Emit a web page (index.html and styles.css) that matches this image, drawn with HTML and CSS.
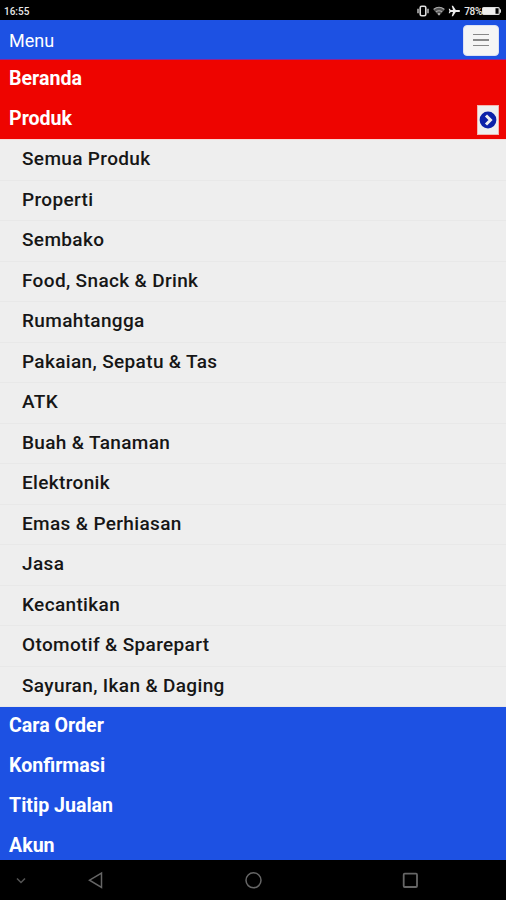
FILE: index.html
```html
<!DOCTYPE html>
<html lang="id">
<head>
  <meta charset="UTF-8" />
  <meta name="viewport" content="width=device-width, initial-scale=1.0"/>
  <title>Menu</title>
  <link rel="stylesheet" href="styles.css">
</head>
<body>
  <div class="status-bar">
    <span class="clock">16:55</span>
    <svg class="status-icons" width="44" height="12" viewBox="0 0 44 12" fill="none">
      <!-- vibrate -->
      <rect x="3.2" y="1.2" width="5.6" height="9.6" rx="1.5" stroke="#ddd" stroke-width="1.6"/>
      <path d="M1 3.8v4.4M11 3.8v4.4" stroke="#bbb" stroke-width="1.5"/>
      <!-- wifi -->
      <path d="M16 4.3Q22 -.5 28 4.3L22 11Z" fill="#555"/>
      <path d="M16.8 4.3Q22 .3 27.2 4.3M19 6.8Q22 4.6 25 6.8" stroke="#aaa" stroke-width="1.1"/>
      <circle cx="22" cy="9" r="1.1" fill="#bbb"/>
      <!-- airplane -->
      <path d="M43 6c0-.7-.5-1-1.200-1H38.800L36 .8h-1.300L36 5h-2.300l-1-1.300h-1L32.400 6l-.7 2.300h1l1-1.300H36l-1.300 4.200H36L38.800 7h3c.7 0 1.200-.3 1.200-1z" fill="#eee"/>
    </svg>
    <span class="percent">78%</span>
    <svg class="battery" width="20" height="8" viewBox="0 0 20 8">
      <rect x=".6" y=".6" width="16.600" height="6.800" rx="1" fill="none" stroke="#ddd" stroke-width="1.200"/>
      <rect x="1" y="1" width="12.500" height="6" fill="#eee"/>
      <rect x="17.500" y="2.300" width="1.500" height="3.400" fill="#ddd"/>
    </svg>
  </div>

  <header class="navbar">
    <span>Menu</span>
    <button class="toggle" aria-label="Menu"><i></i><i></i><i></i></button>
  </header>

  <nav>
    <ul class="menu active">
      <li>Beranda</li>
      <li>Produk
        <span class="arrow">
          <svg width="18" height="18" viewBox="0 0 18 18">
            <circle cx="9" cy="9" r="8.400" fill="#0c21a8"/>
            <path d="M7 4.500L11.500 9 7 13.500" fill="none" stroke="#eee" stroke-width="3"/>
          </svg>
        </span>
      </li>
    </ul>
    <ul class="submenu">
      <li>Semua Produk</li>
      <li>Properti</li>
      <li>Sembako</li>
      <li>Food, Snack &amp; Drink</li>
      <li>Rumahtangga</li>
      <li>Pakaian, Sepatu &amp; Tas</li>
      <li>ATK</li>
      <li>Buah &amp; Tanaman</li>
      <li>Elektronik</li>
      <li>Emas &amp; Perhiasan</li>
      <li>Jasa</li>
      <li>Kecantikan</li>
      <li>Otomotif &amp; Sparepart</li>
      <li>Sayuran, Ikan &amp; Daging</li>
    </ul>
    <ul class="menu">
      <li>Cara Order</li>
      <li>Konfirmasi</li>
      <li>Titip Jualan</li>
      <li>Akun</li>
    </ul>
  </nav>

  <footer class="android-nav">
    <svg width="506" height="40" viewBox="0 0 506 40" fill="none" stroke="#666" stroke-width="1.500">
      <path d="M17 18.500l4 4 4-4" stroke="#555"/>
      <path d="M101.500 13v14.500L89.500 20.200z"/>
      <circle cx="253.500" cy="20.300" r="7.500"/>
      <rect x="403.700" y="13.700" width="13.300" height="13.300" rx="1" stroke-width="1.800"/>
    </svg>
  </footer>
</body>
</html>
```

FILE: styles.css
```css
* {
  box-sizing: border-box;
}

body {
  margin: 0;
  height: 900px;
  overflow: hidden;
  display: flex;
  flex-direction: column;
  background: #000;
  color: #fff;
  font-family: Roboto, sans-serif;
}

ul {
  list-style: none;
  margin: 0;
  padding: 0;
}

.status-bar {
  height: 20px;
  flex: none;
  display: flex;
  align-items: center;
  padding: 2px 4px 0;
  font-size: 10px;
  font-weight: 500;
  color: #e8e8e8;
}

.clock {
  flex: 1;
}

.status-icons {
  margin-right: 3px;
}

.percent {
  letter-spacing: -0.3px;
}

.navbar {
  height: 40px;
  flex: none;
  display: flex;
  align-items: center;
  justify-content: space-between;
  padding: 1px 7px 0 9px;
  background: #1d51e3;
  border-bottom: 1px solid #8e2196;
  font-size: 18px;
}

.toggle {
  width: 36px;
  height: 31px;
  display: flex;
  flex-direction: column;
  align-items: center;
  justify-content: center;
  gap: 4px;
  padding: 0;
  border: 1px solid #dce1f3;
  border-radius: 4px;
  background: #f5f5f5;
}

.toggle i {
  width: 16px;
  height: 1.5px;
  background: #888;
}

.menu {
  background: #1d51e3;
  height: 153px;
  overflow: hidden;
}

.menu.active {
  background: #ee0400;
  height: 79px;
}

.menu li {
  height: 39.800px;
  display: flex;
  align-items: center;
  justify-content: space-between;
  padding: 0 7px 2px 9px;
  font-size: 19.600px;
  font-weight: 700;
}

.menu.active li {
  height: 39.500px;
}

.arrow {
  width: 22px;
  height: 30px;
  display: flex;
  align-items: center;
  justify-content: center;
  margin-top: 4px;
  background: #eee;
  border: 1px solid #f3b5ae;
}

.submenu {
  background: #eee;
  color: #161616;
  border-top: 1px solid #f8d9d6;
}

.submenu li {
  height: 40.500px;
  display: flex;
  align-items: center;
  padding: 0 22px 2px;
  border-bottom: 1px solid #e8e8e8;
  font-size: 19px;
  font-weight: 500;
  letter-spacing: 0.35px;
}

.android-nav {
  height: 40px;
  flex: none;
}

.android-nav svg {
  display: block;
}
```
